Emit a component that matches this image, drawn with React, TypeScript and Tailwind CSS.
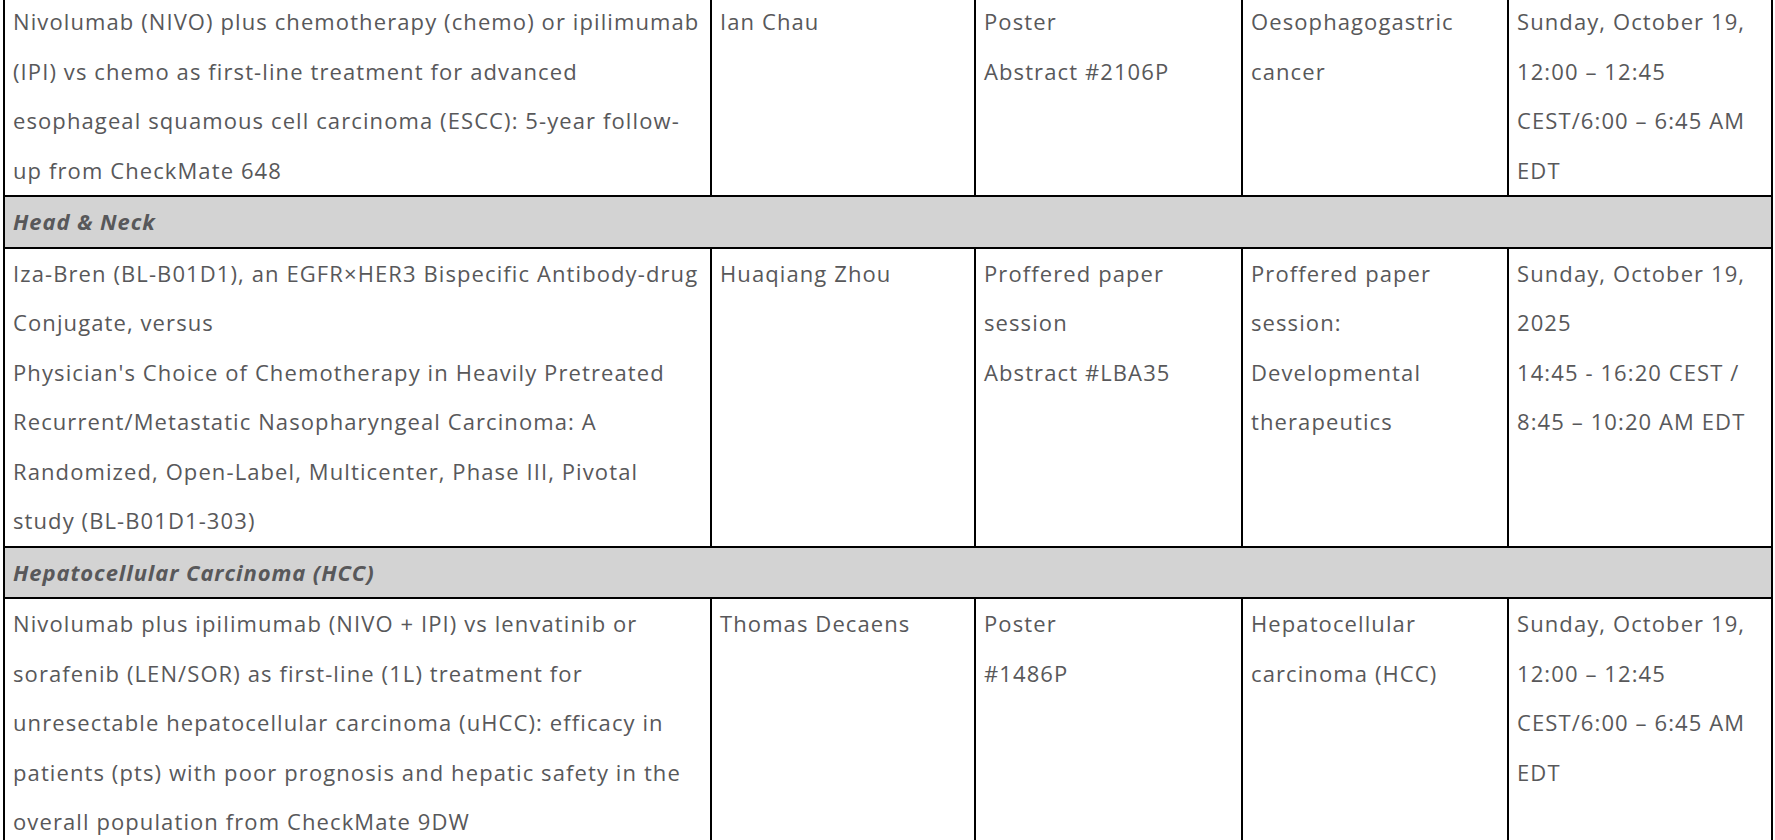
const rows: Array<
  | { section: string }
  | { title: string[]; author: string[]; type: string[]; track: string[]; when: string[] }
> = [
  {
    title: [
      "Nivolumab (NIVO) plus chemotherapy (chemo) or ipilimumab",
      "(IPI) vs chemo as first-line treatment for advanced",
      "esophageal squamous cell carcinoma (ESCC): 5-year follow-",
      "up from CheckMate 648",
    ],
    author: ["Ian Chau"],
    type: ["Poster", "Abstract #2106P"],
    track: ["Oesophagogastric", "cancer"],
    when: ["Sunday, October 19,", "12:00 – 12:45", "CEST/6:00 – 6:45 AM", "EDT"],
  },
  { section: "Head & Neck" },
  {
    title: [
      "Iza-Bren (BL-B01D1), an EGFR×HER3 Bispecific Antibody-drug",
      "Conjugate, versus",
      "Physician's Choice of Chemotherapy in Heavily Pretreated",
      "Recurrent/Metastatic Nasopharyngeal Carcinoma: A",
      "Randomized, Open-Label, Multicenter, Phase III, Pivotal",
      "study (BL-B01D1-303)",
    ],
    author: ["Huaqiang Zhou"],
    type: ["Proffered paper", "session", "Abstract #LBA35"],
    track: ["Proffered paper", "session:", "Developmental", "therapeutics"],
    when: ["Sunday, October 19,", "2025", "14:45 - 16:20 CEST /", "8:45 – 10:20 AM EDT"],
  },
  { section: "Hepatocellular Carcinoma (HCC)" },
  {
    title: [
      "Nivolumab plus ipilimumab (NIVO + IPI) vs lenvatinib or",
      "sorafenib (LEN/SOR) as first-line (1L) treatment for",
      "unresectable hepatocellular carcinoma (uHCC): efficacy in",
      "patients (pts) with poor prognosis and hepatic safety in the",
      "overall population from CheckMate 9DW",
    ],
    author: ["Thomas Decaens"],
    type: ["Poster", "#1486P"],
    track: ["Hepatocellular", "carcinoma (HCC)"],
    when: ["Sunday, October 19,", "12:00 – 12:45", "CEST/6:00 – 6:45 AM", "EDT"],
  },
];

const Lines = ({ lines }: { lines: string[] }) => (
  <>
    {lines.map((l, i) => (
      <div key={i} className="whitespace-nowrap">
        {l}
      </div>
    ))}
  </>
);

const cell = "border-2 border-black align-top pl-[8px] pr-0 py-0 overflow-hidden";

export default function App() {
  return (
    <div className="h-[840px] overflow-hidden bg-white px-[3px] font-['Open_Sans',sans-serif] text-[22px] tracking-[1.1px] leading-[49.5px] text-[#58585a]">
      <table className="-mt-[5px] w-full table-fixed border-collapse">
        <colgroup>
          <col className="w-[707px]" />
          <col className="w-[264px]" />
          <col className="w-[267px]" />
          <col className="w-[266px]" />
          <col className="w-[264px]" />
        </colgroup>
        <tbody>
          {rows.map((r, i) =>
            "section" in r ? (
              <tr key={i} className="bg-[#d3d3d3]">
                <td colSpan={5} className={cell + " font-bold italic tracking-[0.9px]"}>
                  {r.section}
                </td>
              </tr>
            ) : (
              <tr key={i}>
                <td className={cell}>
                  <Lines lines={r.title} />
                </td>
                <td className={cell}>
                  <Lines lines={r.author} />
                </td>
                <td className={cell}>
                  <Lines lines={r.type} />
                </td>
                <td className={cell}>
                  <Lines lines={r.track} />
                </td>
                <td className={cell}>
                  <Lines lines={r.when} />
                </td>
              </tr>
            )
          )}
        </tbody>
      </table>
    </div>
  );
}
